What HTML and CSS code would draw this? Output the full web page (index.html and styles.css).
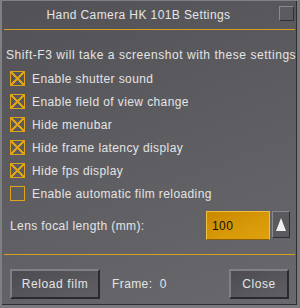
FILE: index.html
```html
<!DOCTYPE html>
<html lang="en">
<head>
    <meta charset="UTF-8">
    <title>Hand Camera Settings</title>
    <link rel="stylesheet" href="styles.css">
</head>
<body>
    <div class="window">
        <div class="title-bar">
            <span class="title">Hand Camera HK 101B Settings</span>
            <span class="close-box"></span>
        </div>
        <div class="rule"></div>

        <p class="hint">Shift-F3 will take a screenshot with these settings</p>

        <div class="options">
            <label class="option"><span class="check on"></span>Enable shutter sound</label>
            <label class="option"><span class="check on"></span>Enable field of view change</label>
            <label class="option"><span class="check on"></span>Hide menubar</label>
            <label class="option"><span class="check on"></span>Hide frame latency display</label>
            <label class="option"><span class="check on"></span>Hide fps display</label>
            <label class="option"><span class="check"></span>Enable automatic film reloading</label>
        </div>

        <div class="lens-row">
            <span>Lens focal length (mm):</span>
            <div class="spin">
                <span class="spin-value">100</span>
                <span class="spin-btn"><span class="tri"></span></span>
            </div>
        </div>

        <div class="rule bottom"></div>

        <div class="footer">
            <button class="btn reload">Reload film</button>
            <span class="frame">Frame:&nbsp;&nbsp;0</span>
            <button class="btn close">Close</button>
        </div>
    </div>
</body>
</html>
```

FILE: styles.css
```css
body {
    margin: 0;
    width: 300px;
    height: 308px;
    font-family: 'Liberation Sans', Arial, sans-serif;
    font-size: 12px;
    color: #e4e4e4;
    letter-spacing: 0.4px;
}

.window {
    box-sizing: border-box;
    height: 308px;
    background: linear-gradient(160deg, #525256 0%, #5e5e62 50%, #69696d 100%);
    border-top: 1px solid #808084;
    border-left: 2px solid #808084;
    border-right: 3px solid #7a7a7e;
    border-bottom: 3px solid #7a7a7e;
    box-shadow: inset -1px -1px 0 #2e2e32;
    padding: 0 2px;
}

.title-bar {
    display: flex;
    align-items: center;
    height: 28px;
    position: relative;
}

.title {
    flex: 1;
    text-align: center;
    padding-right: 22px;
}

.close-box {
    position: absolute;
    right: 1px;
    top: 5px;
    width: 13px;
    height: 13px;
    background: #5c5c60;
    border: 1px solid;
    border-color: #8a8a8e #303034 #303034 #8a8a8e;
}

.rule {
    height: 1px;
    background: #d8a020;
}

.rule.bottom {
    margin-top: 14px;
}

.hint {
    margin: 18px 0 0 2px;
    letter-spacing: 0.55px;
    white-space: nowrap;
}

.options {
    display: flex;
    flex-direction: column;
    gap: 8px;
    margin: 9px 0 0 6px;
}

.option {
    display: flex;
    align-items: center;
    gap: 7px;
    height: 15px;
}

.check {
    box-sizing: border-box;
    width: 15px;
    height: 15px;
    border: 1px solid #e0a418;
    flex: none;
}

.check.on {
    background:
        linear-gradient(45deg, transparent calc(50% - 1px), #e0a418 calc(50% - 1px), #e0a418 calc(50% + 1px), transparent calc(50% + 1px)),
        linear-gradient(-45deg, transparent calc(50% - 1px), #e0a418 calc(50% - 1px), #e0a418 calc(50% + 1px), transparent calc(50% + 1px));
}

.lens-row {
    display: flex;
    align-items: center;
    justify-content: space-between;
    margin: 10px 5px 0 6px;
}

.spin {
    display: flex;
    gap: 2px;
}

.spin-value {
    box-sizing: border-box;
    width: 64px;
    height: 29px;
    padding: 7px 0 0 5px;
    color: #111;
    background: linear-gradient(160deg, #c88800 0%, #d89a08 60%, #e0a010 100%);
    border: 1px solid #f0c040;
    border-bottom-color: #8a6000;
}

.spin-btn {
    box-sizing: border-box;
    width: 18px;
    height: 27px;
    background: #5a5a5e;
    border: 1px solid;
    border-color: #8a8a8e #2e2e32 #2e2e32 #8a8a8e;
    display: flex;
    align-items: center;
    justify-content: center;
}

.tri {
    width: 0;
    height: 0;
    border-left: 5px solid transparent;
    border-right: 5px solid transparent;
    border-bottom: 13px solid #f0f0f0;
}

.footer {
    display: flex;
    align-items: center;
    margin: 14px 6px 0 6px;
}

.btn {
    box-sizing: border-box;
    height: 30px;
    font-family: inherit;
    font-size: 12px;
    letter-spacing: 0.6px;
    color: #e4e4e4;
    background: linear-gradient(160deg, #4c4c50 0%, #606064 100%);
    border: 2px solid;
    border-color: #808084 #2a2a2e #2a2a2e #808084;
}

.reload {
    width: 90px;
}

.frame {
    margin-left: 12px;
    flex: 1;
}

.close {
    width: 60px;
}
```
